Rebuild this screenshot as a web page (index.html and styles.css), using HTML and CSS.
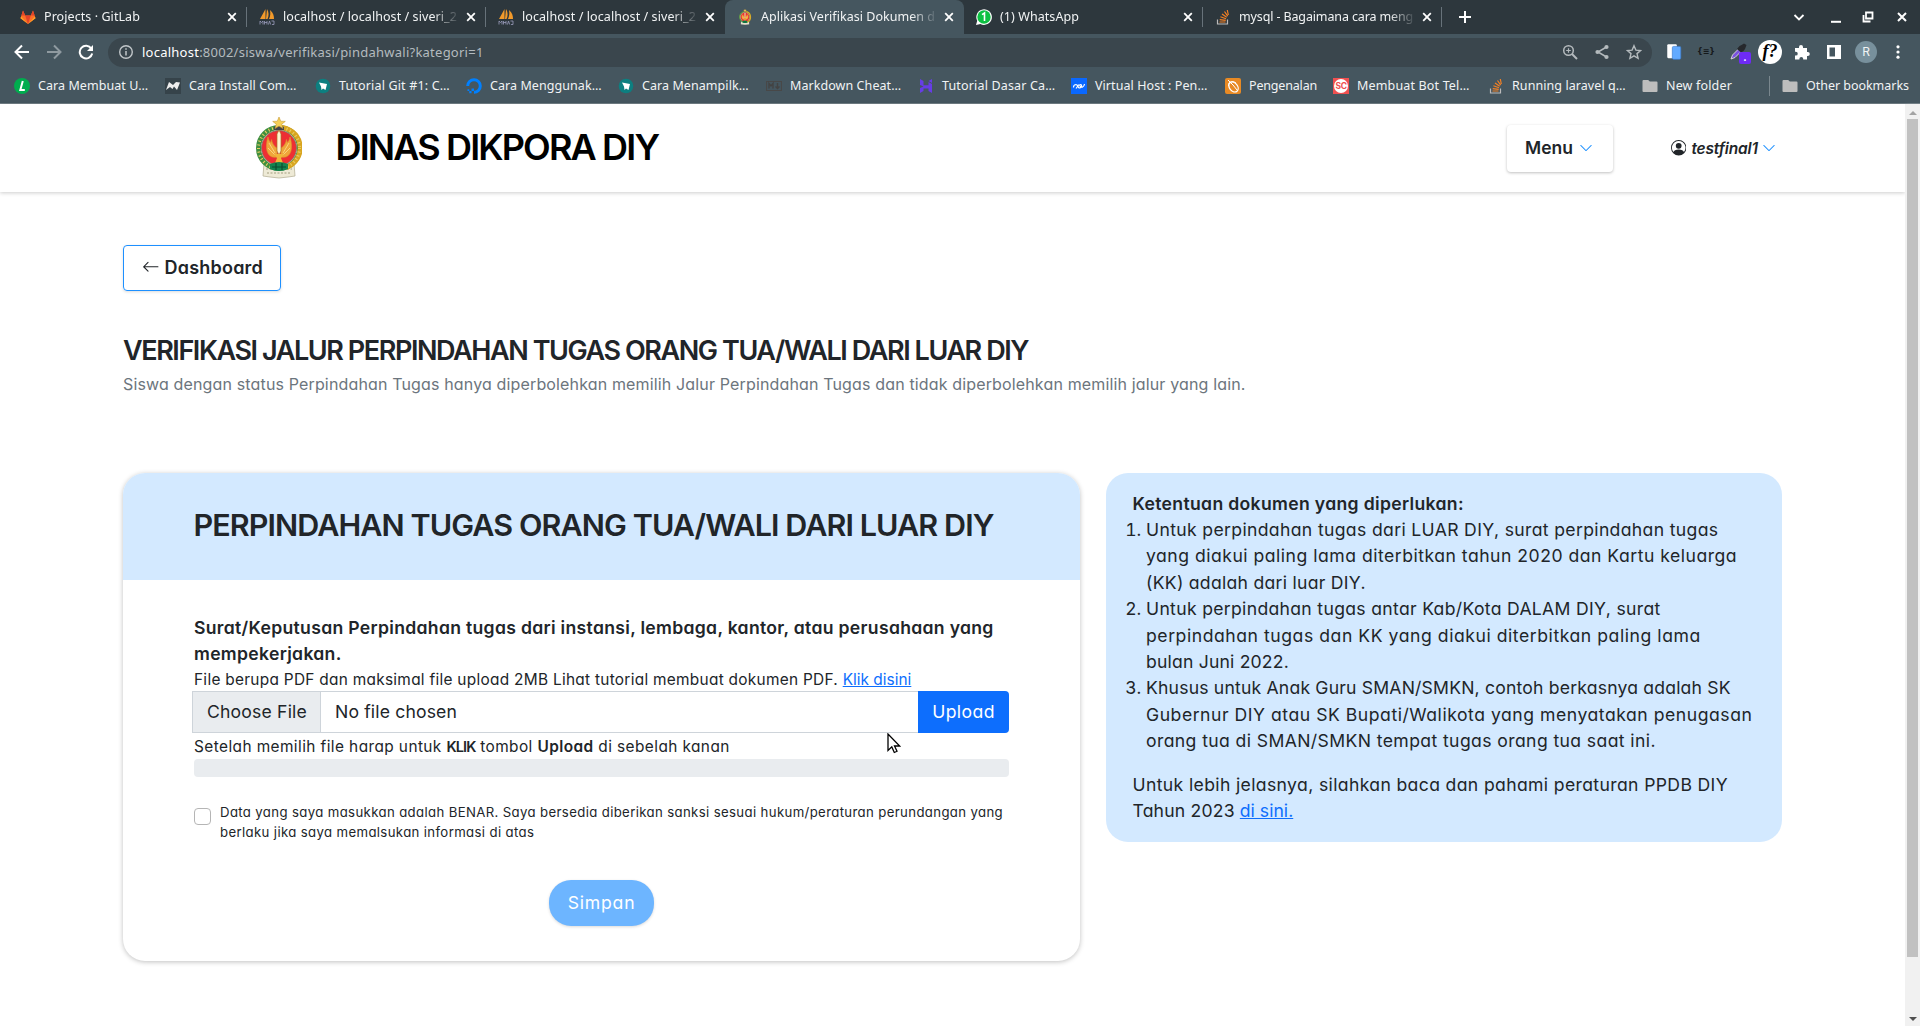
FILE: index.html
```html
<!DOCTYPE html>
<html lang="id">
<head>
<meta charset="utf-8">
<title>Aplikasi Verifikasi Dokumen</title>
<link rel="stylesheet" href="styles.css">
</head>
<body>
<svg class="defs" aria-hidden="true">
  <defs>
    <symbol id="x" viewBox="0 0 10 10"><path d="M1.2 1.2l7.6 7.6M8.8 1.2L1.2 8.8" stroke="#fff" stroke-width="1.8" fill="none"/></symbol>
    <symbol id="pma" viewBox="0 0 16 16"><path d="M6.500 0L1 10h5.500zM8 0c2 3 2 7 .5 10L7 10zM11 1c3.500 3 4 6 4 9H10c1.500-3 1.500-6 1-9z" fill="#f29a2b"/><path d="M1 15.500V12l1.500 1.500L4 12v3.500M5.500 15.500V12M8 15.500V12M5.500 13.500H8M9.500 15.500l1-3.500 1.200 3.500M12.500 12h2.500v3.500h-2" stroke="#9a9cbc" stroke-width=".8" fill="none"/></symbol>
    <symbol id="so" viewBox="0 0 16 16"><path d="M2.500 10.500V15h10v-4.500" stroke="#bcbbbb" stroke-width="1.200" fill="none"/><path d="M4.500 13h6M4.700 10.600l6 .7M5.400 7.800l5.600 1.900M7 5l4.700 3.200M9.500 2.500l3.200 4.600M12.300 1l1 5" stroke="#f48024" stroke-width="1.200" fill="none"/></symbol>
    <symbol id="crest" viewBox="0 0 46 62">
      <path d="M8 46h30l1 13-7 1-9 1-9-1-7-1z" fill="#eeead6" stroke="#b9b49a" stroke-width=".8"/>
      <path d="M10 52h26M11 56h24" stroke="#a39e80" stroke-dasharray="2 1.500" fill="none"/>
      <circle cx="23" cy="31" r="20.500" fill="#fff" stroke="#3f8f3f" stroke-width="5"/>
      <path d="M23 10.500a20.500 20.500 0 0 1 7 40" fill="none" stroke="#d9a520" stroke-width="5"/>
      <circle cx="23" cy="31" r="20.500" fill="none" stroke="#e8cd62" stroke-width="3" stroke-dasharray="1.100 2.600"/>
      <circle cx="23" cy="31" r="17.500" fill="#ee2f33" stroke="#876"/>
      <path d="M21 40C12 42 8 33 12 20c.5 3 1.500 4.500 3 5.500l.5-3c1 5 3 7 5.500 8.500zM25 40c9 2 13-7 9-20-.5 3-1.500 4.500-3 5.500l-.5-3c-1 5-3 7-5.500 8.500z" fill="#f0a53a" stroke="#d99a2c" stroke-width=".6"/>
      <path d="M13 26l6 10M12 31l7 7M33 26l-6 10M34 31l-7 7" stroke="#fbdf8a" stroke-width=".8"/>
      <path d="M23 13l2 4v17l-2 4-2-4V17z" fill="#fff3cf" stroke="#a9761f" stroke-width=".7"/>
      <path d="M18 37h10l-3 4 2 5h-8l2-5z" fill="#f0b53a"/>
      <path d="M14 47q9-4 18 0v5q-9 4-18 0z" fill="#12834f"/><path d="M20 46v7M26 46v7M16 50h14" stroke="#0a4b2f" stroke-width="1.200"/>
      <path d="M18 10q5-4 10 0v3H18z" fill="#43434a"/>
      <path d="M23 0l1.700 4.200 4.600.2-3.600 2.800 1.300 4.300-4-2.400-4 2.400 1.300-4.300-3.600-2.800 4.600-.2z" fill="#f5cf57" stroke="#c79a33" stroke-width=".6"/>
    </symbol>
    <symbol id="teal" viewBox="0 0 16 16"><circle cx="8" cy="8" r="7.300" fill="#0d7f80"/><path d="M4 4.500l8 1.500-1.500 6-2.500-1.500L6.500 12 6 8.500z" fill="#fff"/></symbol>
    <symbol id="folder" viewBox="0 0 16 14"><path d="M1.500 1h4.700l1.600 1.600h6.700a1 1 0 0 1 1 1V12a1 1 0 0 1-1 1h-13a1 1 0 0 1-1-1V2a1 1 0 0 1 1-1z" fill="#bdbdbd"/></symbol>
    <symbol id="chev" viewBox="0 0 16 16"><path fill="#1e90ff" fill-rule="evenodd" d="M1.646 4.646a.5.5 0 0 1 .708 0L8 10.293l5.646-5.647a.5.5 0 0 1 .708.708l-6 6a.5.5 0 0 1-.708 0l-6-6a.5.5 0 0 1 0-.708z"/></symbol>
  </defs>
</svg>

<div class="browser">
  <div class="tabs">
    <div class="tab"><svg class="ico" viewBox="0 0 16 16"><path d="M8 15L.5 9.300 3 1.500l2.200 5h5.600l2.200-5 2.500 7.800z" fill="#fc6d26"/><path d="M8 15L5.200 6.500h5.600z" fill="#e24329"/><path d="M3 1.500l2.200 5H1.400zM13 1.500l-2.200 5h3.800z" fill="#e24329"/><path d="M8 15L.5 9.300l.6-1.700zM8 15l7.500-5.700-.6-1.700z" fill="#fca326"/></svg><span class="tab-title">Projects · GitLab</span><svg class="close"><use href="#x"/></svg></div>
    <div class="tab"><svg class="ico"><use href="#pma"/></svg><span class="tab-title">localhost / localhost / siveri_2</span><svg class="close"><use href="#x"/></svg></div>
    <div class="tab no-line"><svg class="ico"><use href="#pma"/></svg><span class="tab-title">localhost / localhost / siveri_2</span><svg class="close"><use href="#x"/></svg></div>
    <div class="tab active no-line"><svg class="ico"><use href="#crest"/></svg><span class="tab-title">Aplikasi Verifikasi Dokumen d</span><svg class="close"><use href="#x"/></svg></div>
    <div class="tab"><svg class="ico" viewBox="0 0 16 16"><path d="M0 16l1.200-4.200A7.800 7.800 0 1 1 4.400 15z" fill="#fff"/><circle cx="8" cy="8" r="6.700" fill="#0dc143"/><path d="M6 5.600L8.500 4v8" fill="none" stroke="#fff" stroke-width="1.600"/></svg><span class="tab-title">(1) WhatsApp</span><svg class="close"><use href="#x"/></svg></div>
    <div class="tab last"><svg class="ico"><use href="#so"/></svg><span class="tab-title tight">mysql - Bagaimana cara meng</span><svg class="close"><use href="#x"/></svg></div>
    <svg class="plus" viewBox="0 0 12 12"><path d="M6 0v12M0 6h12" stroke="#fff" stroke-width="2"/></svg>
    <div class="window-buttons">
      <svg viewBox="0 0 12 12"><path d="M1.500 4L6 8.500 10.500 4" fill="none" stroke="#fff" stroke-width="1.800"/></svg>
      <svg class="minimize" viewBox="0 0 12 12"><path d="M1 10.800h10" stroke="#fff" stroke-width="2"/></svg>
      <svg viewBox="0 0 12 12"><path d="M4 1.500h6.500v6H4zM1.500 4v6.500h7" fill="none" stroke="#fff" stroke-width="1.800"/></svg>
      <svg viewBox="0 0 12 12"><path d="M2 2l8 8M10 2l-8 8" stroke="#fff" stroke-width="2"/></svg>
    </div>
  </div>

  <div class="toolbar">
    <div class="nav-buttons">
      <svg viewBox="0 0 16 16"><path d="M15 8H2M8 1.500L1.500 8 8 14.500" fill="none" stroke="#fff" stroke-width="2"/></svg>
      <svg viewBox="0 0 16 16"><path d="M1 8h13M8 1.500L14.500 8 8 14.500" fill="none" stroke="#8f9aa0" stroke-width="2"/></svg>
      <svg viewBox="0 0 16 16"><path d="M13.300 4.600A6.300 6.300 0 1 0 14.200 9.500" fill="none" stroke="#fff" stroke-width="2"/><path d="M15 1v6H9z" fill="#fff"/></svg>
    </div>
    <div class="omnibox">
      <svg class="info" viewBox="0 0 16 16"><circle cx="8" cy="8" r="6.300" fill="none" stroke="#c1c6c9" stroke-width="1.400"/><path d="M8 7v4.500M8 4.200v1.600" stroke="#c1c6c9" stroke-width="1.500"/></svg>
      <span class="url"><b>localhost</b>:8002/siswa/verifikasi/pindahwali?kategori=1</span>
      <div class="omni-icons">
        <svg viewBox="0 0 16 16"><circle cx="6.500" cy="6.500" r="4.800" fill="none" stroke="#b4babd" stroke-width="1.500"/><path d="M10 10l5 5" stroke="#b4babd" stroke-width="1.900"/><path d="M6.500 4.200v4.600M4.200 6.500h4.600" stroke="#b4babd" stroke-width="1.200"/></svg>
        <svg viewBox="0 0 16 16"><path d="M12.500 3L4 8l8.500 5" fill="none" stroke="#b4babd" stroke-width="1.500"/><circle cx="12.500" cy="3" r="2.100" fill="#b4babd"/><circle cx="3.500" cy="8" r="2.100" fill="#b4babd"/><circle cx="12.500" cy="13" r="2.100" fill="#b4babd"/></svg>
        <svg viewBox="0 0 16 16"><path d="M8 1.700l1.900 4.400 4.700.4-3.600 3.100 1.100 4.700L8 11.800l-4.100 2.500L5 9.600 1.400 6.500l4.700-.4z" fill="none" stroke="#b4babd" stroke-width="1.400"/></svg>
      </div>
    </div>
    <div class="extensions">
      <svg class="e1" viewBox="0 0 16 16"><rect x="2" y="1" width="8.500" height="12.500" rx="1" fill="#fff"/><rect x="6.500" y="3" width="7.500" height="11.500" rx="1.200" fill="#62aaff" stroke="#3c7dd0" stroke-width=".6"/></svg>
      <span class="braces">{≡}</span>
      <span class="picker"><svg viewBox="0 0 18 18"><path d="M2 16l1.500-4L11 4.500 13.500 7 6 14.500z" fill="#7a52e0" stroke="#ddd" stroke-width=".9"/><path d="M8 6l2.500-3 2-1L15 .5 17.500 2 16 6l-1.500 2L12 9.500z" fill="#26282c"/></svg><i class="badge">.</i></span>
      <span class="fq">f?</span>
      <svg class="e5" viewBox="0 0 16 16"><path d="M1 4h4V3a2 2 0 0 1 4 0v1h4v4h.8a2 2 0 0 1 0 4H13v3.500H9.200v-.7a1.900 1.900 0 0 0-3.800 0v.7H1v-4h.9a1.800 1.800 0 0 0 0-3.700H1z" fill="#fff"/></svg>
      <svg class="e6" viewBox="0 0 16 16"><path d="M1 1h14v14H1zM3.500 3.500v9h5.500v-9z" fill="#fff" fill-rule="evenodd"/></svg>
      <span class="avatar">R</span>
      <svg class="e8" viewBox="0 0 16 16"><circle cx="8" cy="2.800" r="1.600" fill="#fff"/><circle cx="8" cy="8" r="1.600" fill="#fff"/><circle cx="8" cy="13.200" r="1.600" fill="#fff"/></svg>
    </div>
  </div>

  <div class="bookmarks">
    <span class="bm w151"><svg class="ico" viewBox="0 0 16 16"><circle cx="8" cy="8" r="8" fill="#00ad4e"/><path d="M8.800 3L6.300 12h4.500" fill="none" stroke="#fff" stroke-width="2"/></svg>Cara Membuat U…</span>
    <span class="bm w150"><svg class="ico" viewBox="0 0 16 16"><path d="M0 0h16v16H0z" fill="#36434a"/><path d="M1 12L4 4l4 3 3-3 4 .5L12 12 9 8.500 7.500 11 5 9z" fill="#eee"/></svg>Cara Install Com…</span>
    <span class="bm w151 ls2"><svg class="ico"><use href="#teal"/></svg>Tutorial Git #1: C…</span>
    <span class="bm w152"><svg class="ico" viewBox="0 0 16 16"><path d="M8 14.300A6.300 6.300 0 1 0 1.700 8" fill="none" stroke="#0080ff" stroke-width="3"/><path d="M5.500 10.500H8V13H5.500zM3.300 13h2.200v2.200H3.300zM1.500 11.200h1.800V13H1.500z" fill="#0080ff"/></svg>Cara Menggunak…</span>
    <span class="bm w148"><svg class="ico"><use href="#teal"/></svg>Cara Menampilk…</span>
    <span class="bm w152"><svg class="ico" viewBox="0 0 16 16"><path d="M.5 3.500h15v9H.5z" fill="none" stroke="#484848" stroke-width="1.200"/><path d="M3 10.500v-5l2 2.500 2-2.500v5M11.500 5v5M9.500 8.500l2 2 2-2" fill="none" stroke="#434343" stroke-width="1.400"/></svg>Markdown Cheat…</span>
    <span class="bm w153 ls2"><svg class="ico" viewBox="0 0 16 16"><path d="M2 1l3.500 2v4.200h5V4L14 6v2.500H5.500L2 7zM14 1v4l-3.500-2zM2 10l3.500-1.500H14V15l-3.500-2v-2.500h-5V13L2 15z" fill="#673de6"/></svg>Tutorial Dasar Ca…</span>
    <span class="bm w154"><svg class="ico" viewBox="0 0 16 16"><path d="M0 0h16v16H0z" fill="#0a68ff"/><path d="M2.500 9.500c0-3.500 3.500-3.500 4.500-1s3 1.500 3.500-.5-2.500-2-1.500 0 4 1.500 4.500-2M5 10.500L8 6.500" fill="none" stroke="#fff" stroke-width="1.200"/></svg>Virtual Host : Pen…</span>
    <span class="bm w108 lsn"><svg class="ico" viewBox="0 0 16 16"><rect width="16" height="16" rx="2" fill="#e88a24"/><ellipse cx="8.500" cy="9" rx="4" ry="5.500" transform="rotate(-40 8.500 9)" fill="none" stroke="#fff" stroke-width="1.300"/><path d="M3 2l5 5 4 5M3.500 8C3 4 7 2 11 5" fill="none" stroke="#fff"/></svg>Pengenalan</span>
    <span class="bm w155 ls2"><svg class="ico" viewBox="0 0 16 16"><path d="M0 0h16v16H0z" fill="#f05050"/><circle cx="8" cy="8" r="7" fill="#fff"/><text x="8" y="11.200" text-anchor="middle" class="sc">SC</text></svg>Membuat Bot Tel…</span>
    <span class="bm w154"><svg class="ico"><use href="#so"/></svg>Running laravel q…</span>
    <span class="bm ls2"><svg class="ico"><use href="#folder"/></svg>New folder</span>
    <span class="bm other"><svg class="ico"><use href="#folder"/></svg>Other bookmarks</span>
  </div>
</div>

<div class="viewport">
  <div class="page">
    <header class="navbar">
      <svg class="logo"><use href="#crest"/></svg>
      <h1 class="brand">DINAS DIKPORA DIY</h1>
      <button class="menu-btn">Menu<svg class="chev"><use href="#chev"/></svg></button>
      <div class="user">
        <svg class="person" viewBox="0 0 16 16"><path d="M11 6a3 3 0 1 1-6 0 3 3 0 0 1 6 0z" fill="#212529"/><path fill="#212529" fill-rule="evenodd" d="M0 8a8 8 0 1 1 16 0A8 8 0 0 1 0 8zm8-7a7 7 0 0 0-5.468 11.370C3.242 11.226 4.805 10 8 10s4.757 1.225 5.468 2.370A7 7 0 0 0 8 1z"/></svg>
        <em>testfinal1</em><svg class="chev"><use href="#chev"/></svg>
      </div>
    </header>

    <main>
      <a class="back"><svg viewBox="0 0 16 16"><path fill="#212529" fill-rule="evenodd" d="M15 8a.5.5 0 0 0-.5-.5H2.707l3.147-3.146a.5.5 0 1 0-.708-.708l-4 4a.5.5 0 0 0 0 .708l4 4a.5.5 0 0 0 .708-.708L2.707 8.500H14.500A.5.5 0 0 0 15 8z"/></svg>Dashboard</a>
      <h2 class="title">VERIFIKASI JALUR PERPINDAHAN TUGAS ORANG TUA/WALI DARI LUAR DIY</h2>
      <p class="subtitle">Siswa dengan status Perpindahan Tugas hanya diperbolehkan memilih Jalur Perpindahan Tugas dan tidak diperbolehkan memilih jalur yang lain.</p>

      <div class="columns">
        <section class="card">
          <h3 class="card-head">PERPINDAHAN TUGAS ORANG TUA/WALI DARI LUAR DIY</h3>
          <div class="card-body">
            <p class="lead">Surat/Keputusan Perpindahan tugas dari instansi, lembaga, kantor, atau perusahaan yang<br>mempekerjakan.</p>
            <p class="note">File berupa PDF dan maksimal file upload 2MB Lihat tutorial membuat dokumen PDF. <a class="link">Klik disini</a></p>
            <div class="file-row">
              <span class="choose">Choose File</span><span class="chosen">No file chosen</span><button class="upload">Upload</button>
            </div>
            <p class="note hint">Setelah memilih file harap untuk <b class="klik">KLIK</b> tombol <b>Upload</b> di sebelah kanan</p>
            <div class="progress"></div>
            <div class="agree"><span class="checkbox"></span><p>Data yang saya masukkan adalah BENAR. Saya bersedia diberikan sanksi sesuai hukum/peraturan perundangan yang<br>berlaku jika saya memalsukan informasi di atas</p></div>
            <button class="save">Simpan</button>
          </div>
        </section>

        <aside class="rules">
          <b class="rules-title">Ketentuan dokumen yang diperlukan:</b>
          <ol>
            <li><span class="s34">Untuk perpindahan tugas dari LUAR DIY, surat perpindahan tugas</span><span class="s50">yang diakui paling lama diterbitkan tahun 2020 dan Kartu keluarga</span><span class="s28">(KK) adalah dari luar DIY.</span></li>
            <li><span class="s32">Untuk perpindahan tugas antar Kab/Kota DALAM DIY, surat</span><span class="s55">perpindahan tugas dan KK yang diakui diterbitkan paling lama</span><span class="s18">bulan Juni 2022.</span></li>
            <li><span class="s18">Khusus untuk Anak Guru SMAN/SMKN, contoh berkasnya adalah SK</span><span class="s53">Gubernur DIY atau SK Bupati/Walikota yang menyatakan penugasan</span><span class="s39">orang tua di SMAN/SMKN tempat tugas orang tua saat ini.</span></li>
          </ol>
          <p><span class="s36">Untuk lebih jelasnya, silahkan baca dan pahami peraturan PPDB DIY</span><span class="s18">Tahun 2023 <a class="link">di sini.</a></span></p>
        </aside>
      </div>
    </main>
  </div>
  <div class="scrollbar"><i class="up"></i><i class="thumb"></i><i class="down"></i></div>
</div>
<svg class="cursor" viewBox="0 0 14 21"><path d="M1 1v16.500l3.800-3.600 2.500 5.600 2.700-1.200-2.500-5.300h5.200z" fill="#fff" stroke="#000" stroke-width="1.300"/></svg>
</body>
</html>
```
FILE: styles.css
```css
* { box-sizing: border-box; }
body { margin: 0; width: 1920px; height: 1026px; overflow: hidden; background: #fff; color: #212529; font-family: Inter, sans-serif; font-feature-settings: "cv11"; }
h1, h2, h3, p, ol { margin: 0; padding: 0; }
button { margin: 0; padding: 0; font: inherit; color: inherit; border: 0; }
svg { display: block; flex: none; }
.defs { position: absolute; width: 0; height: 0; }

/* Browser chrome */
.browser { font: 12.5px/18px "Noto Sans", sans-serif; color: #f1f3f4; }
.tabs { display: flex; align-items: center; height: 34px; padding-left: 8px; background: #2d373d; }
.tab { display: flex; align-items: center; width: 239px; height: 34px; padding: 0 10px 0 12px; position: relative; letter-spacing: .07px; }
.tab::after { content: ""; position: absolute; right: 0; top: 7px; width: 1px; height: 20px; background: #67727a; }
.tab.no-line::after { display: none; }
.tab.active { background: #45565f; border-radius: 8px 8px 0 0; letter-spacing: .03px; }
.tab-title { width: 174px; margin: 0 9px 0 8px; white-space: nowrap; overflow: hidden; -webkit-mask-image: linear-gradient(90deg, #000 86%, transparent 102%); mask-image: linear-gradient(90deg, #000 86%, transparent 102%); }
.tight { letter-spacing: -.13px; }
.ico { width: 16px; height: 16px; }
.close { width: 10px; height: 10px; }
.plus { width: 12px; height: 12px; margin-left: 17px; }
.window-buttons { display: flex; gap: 22px; margin-left: auto; padding-right: 12px; }
.window-buttons svg { width: 12px; height: 12px; }
.window-buttons .minimize { margin: 0 -2px 0 3px; }

.toolbar { display: flex; align-items: center; height: 36px; background: #45565f; }
.nav-buttons { display: flex; gap: 16px; width: 108px; padding-left: 14px; }
.nav-buttons svg { width: 16px; height: 16px; }
.omnibox { display: flex; align-items: center; width: 1544px; height: 29px; padding: 0 10px; border-radius: 15px; background: #3a464d; }
.info { width: 16px; height: 16px; }
.url { margin-left: 8px; padding-bottom: 1px; font-size: 13px; letter-spacing: .245px; color: #b4bbbf; }
.url b { font-weight: 400; color: #fff; }
.omni-icons { display: flex; gap: 16px; margin-left: auto; }
.omni-icons svg { width: 16px; height: 16px; }
.extensions { display: flex; align-items: center; padding-left: 13px; }
.extensions svg { width: 16px; height: 16px; }
.extensions .e1 { width: 18px; height: 18px; }
.braces { width: 22px; margin-left: 12px; text-align: center; font: bold 8px/16px "DejaVu Sans", sans-serif; color: #15191b; }
.picker { position: relative; width: 24px; margin-left: 12px; }
.picker svg { width: 18px; height: 18px; }
.badge { position: absolute; left: 10px; top: 9px; width: 12px; height: 12px; border-radius: 2px; background: #6e2bf5; font: bold 10px/10px Inter, sans-serif; text-align: center; color: #fff; }
.fq { width: 24px; height: 24px; margin-left: 5px; border-radius: 50%; background: #fff; color: #000; font: italic bold 18px/23px "Liberation Serif", serif; text-align: center; }
.extensions .e5 { margin-left: 12px; }
.extensions .e6 { margin-left: 16px; }
.avatar { width: 22px; height: 22px; margin-left: 13px; border-radius: 50%; background: #78909c; text-align: center; font: 12px/22px Inter, sans-serif; }
.extensions .e8 { margin-left: 13px; }

.bookmarks { display: flex; align-items: center; height: 34px; padding: 0 11px 2px 14px; background: #45565f; border-bottom: 1px solid #727f86; }
.bm { display: flex; align-items: center; gap: 8px; white-space: nowrap; letter-spacing: .07px; }
.w148 { width: 148px; }
.w150 { width: 150px; }
.w151 { width: 151px; }
.w152 { width: 152px; }
.w153 { width: 153px; }
.w154 { width: 154px; }
.w155 { width: 155px; }
.w108 { width: 108px; }
.ls2 { letter-spacing: .16px; }
.lsn { letter-spacing: -.17px; }
.other { margin-left: auto; padding-left: 12px; height: 20px; border-left: 1px solid #7a878e; letter-spacing: -.03px; }
.sc { font: bold 8.500px Inter, sans-serif; fill: #f05050; letter-spacing: -.5px; }

/* Page */
.viewport { display: flex; height: 922px; }
.page { width: 1905px; }
.navbar { display: flex; align-items: center; height: 88px; padding-left: 256px; box-shadow: 0 1px 4px rgba(0, 0, 0, .2); }
.logo { width: 46px; height: 62px; }
.brand { width: 321px; margin: -2px 0 0 33.500px; font-size: 36px; font-weight: 600; line-height: 44px; letter-spacing: -1.850px; color: #000; white-space: nowrap; }
.menu-btn { display: flex; align-items: center; justify-content: center; gap: 6px; width: 106px; height: 47px; margin-left: 850.500px; padding: 0 2px 1px 0; border-radius: 4px; background: #fff; box-shadow: 0 1px 3px rgba(0, 0, 0, .25); font-size: 17.500px; font-weight: 600; }
.chev { width: 14px; height: 14px; }
.user { display: flex; align-items: center; margin-left: 58px; font-size: 15.500px; font-weight: 600; }
.user em { margin: 0 4px 0 5px; letter-spacing: -.15px; }
.person { width: 15.400px; height: 15.400px; }

main { padding: 53px 123px 0; }
.back { display: flex; align-items: center; gap: 5px; width: 158px; height: 46px; padding: 0 0 2px 18px; border: 1px solid #1e90ff; border-radius: 4px; box-shadow: 0 1px 3px rgba(0, 0, 0, .14); font-size: 18px; font-weight: 600; letter-spacing: .2px; }
.back svg { width: 17.600px; height: 17.600px; }
.title { margin: 43px 0 0; font-size: 27px; font-weight: 600; line-height: 33px; letter-spacing: -1.420px; white-space: nowrap; }
.subtitle { margin: 5px 0 0; font-size: 16px; line-height: 24px; letter-spacing: .148px; color: #6c757d; white-space: nowrap; }
.columns { display: flex; align-items: flex-start; gap: 26px; margin-top: 77px; }
.card { width: 957px; height: 488px; border-radius: 22px; overflow: hidden; box-shadow: 0 1px 5px rgba(0, 0, 0, .25); }
.card-head { height: 107px; padding: 33px 0 0 70.500px; background: #d3e9ff; font-size: 30.500px; font-weight: 600; line-height: 37px; letter-spacing: -.92px; white-space: nowrap; }
.card-body { display: flex; flex-direction: column; padding: 35px 71px 0; }
.lead { font-size: 17.600px; font-weight: 600; line-height: 26.400px; letter-spacing: .308px; white-space: nowrap; }
.note { font-size: 15.400px; line-height: 23.100px; letter-spacing: .289px; white-space: nowrap; }
.link { color: #0d6efd; text-decoration: underline; letter-spacing: .02px; }
.file-row { display: flex; height: 42px; margin: .1px 0 0 -2px; font-size: 17.600px; line-height: 40px; }
.choose { width: 129px; padding-left: 14px; border: 1px solid #ced4da; background: #e9ecef; letter-spacing: .18px; }
.chosen { flex: 1; padding-left: 14px; border: 1px solid #ced4da; border-width: 1px 0; letter-spacing: .15px; }
.upload { width: 91px; border-radius: 0 4px 4px 0; background: #0d6efd; color: #fff; letter-spacing: .41px; }
.hint { margin-top: 2px; letter-spacing: .42px; }
.hint b { font-weight: 600; }
.hint .klik { font-size: 14.500px; letter-spacing: -.9px; }
.progress { height: 18px; margin-top: 1px; border-radius: 4px; background: #e9ecef; }
.agree { display: flex; gap: 9px; margin-top: 25px; font-size: 13.200px; line-height: 20px; letter-spacing: .36px; white-space: nowrap; }
.checkbox { flex: none; width: 17px; height: 17px; margin-top: 5.500px; border: 1px solid #b5b5b5; border-radius: 4px; background: #fff; }
.save { align-self: center; width: 105px; height: 46px; margin-top: 38px; padding-bottom: 2px; border-radius: 22px; background: #6db5ff; color: #fff; font-size: 17.600px; letter-spacing: .8px; box-shadow: 0 1px 3px rgba(0, 0, 0, .15); }

.rules { width: 676px; height: 369px; padding: 17.500px 0 0 26.500px; border-radius: 22px; background: #d3e9ff; font-size: 17.600px; line-height: 26.400px; white-space: nowrap; }
.rules-title { display: block; font-weight: 600; letter-spacing: .33px; }
.rules ol { padding-left: 13.500px; }
.rules p { margin-top: 17.200px; }
.rules span { display: block; }
.s18 { letter-spacing: .185px; }
.s28 { letter-spacing: .275px; }
.s32 { letter-spacing: .315px; }
.s34 { letter-spacing: .345px; }
.s36 { letter-spacing: .36px; }
.s39 { letter-spacing: .39px; }
.s50 { letter-spacing: .5px; }
.s53 { letter-spacing: .53px; }
.s55 { letter-spacing: .55px; }

.scrollbar { display: flex; flex-direction: column; align-items: center; width: 15px; padding: 7px 0 5px; background: #f1f1f1; }
.up, .down { border: 4px solid transparent; border-top-width: 0; border-bottom: 4px solid #a3a3a3; }
.down { border-top: 4px solid #505050; border-bottom-width: 0; margin-top: auto; }
.thumb { width: 11px; height: 838px; margin-top: 4px; background: #c1c1c1; }
.cursor { position: absolute; left: 887px; top: 733px; width: 14px; height: 21px; }
```
